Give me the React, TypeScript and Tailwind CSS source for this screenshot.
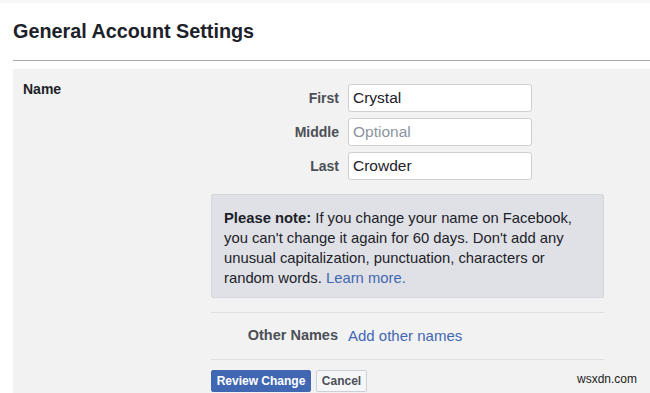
import React from "react";

const font = { fontFamily: '"Liberation Sans", Arial, sans-serif' };

function Field({ label, value, placeholder }: { label: string; value?: string; placeholder?: string }) {
  return (
    <div className="flex items-center">
      <div className="w-[128px] text-right text-[14px] font-bold text-[#4b4f56]">{label}</div>
      <div className="ml-[9px] w-[184px] h-[28px] bg-white border border-[#ccd0d5] rounded-[3px] flex items-center pl-[4px] text-[15.5px]">
        {value ? (
          <span className="text-[#1d2129]">{value}</span>
        ) : (
          <span className="text-[#8d949e]">{placeholder}</span>
        )}
      </div>
    </div>
  );
}

export default function App() {
  return (
    <div className="w-[650px] h-[393px] bg-white overflow-hidden relative" style={font}>
      <div className="h-[3px] bg-[#f7f7f7]" />
      <div className="pl-[13px] pt-[16px] h-[57px] text-[19.8px] font-bold text-[#1d2129] leading-[24px]">
        General Account Settings
      </div>
      <div className="ml-[13px] border-t border-[#a8a8a8]" />
      <div className="ml-[13px] mt-[8px] bg-[#f2f2f2] flex h-[400px]">
        <div className="w-[198px] pl-[10px] pt-[10px] text-[14px] font-bold text-[#1d2129]">Name</div>
        <div className="w-[393px] pt-[15px]">
          <div className="flex flex-col gap-[6px]">
            <Field label="First" value="Crystal" />
            <Field label="Middle" placeholder="Optional" />
            <Field label="Last" value="Crowder" />
          </div>
          <div className="mt-[14px] h-[104px] bg-[#dfe1e6] border border-[#d3d6db] rounded-[2px] pl-[12px] pr-[10px] pt-[13px] text-[14.8px] leading-[20px] text-[#1d2129]">
            <p>
              <b>Please note:</b> If you change your name on Facebook, you can't change it again for 60 days. Don't add any unusual capitalization, punctuation, characters or random words. <span className="text-[#4267b2]">Learn more.</span>
            </p>
          </div>
          <div className="mt-[14px] border-t border-[#dddfe2]" />
          <div className="flex items-center h-[46px]">
            <div className="w-[127px] text-right text-[14.5px] font-bold text-[#4b4f56]">Other Names</div>
            <div className="ml-[10px] text-[15px] text-[#4267b2]">Add other names</div>
          </div>
          <div className="border-t border-[#dddfe2]" />
          <div className="mt-[10px] flex gap-[5px]">
            <div className="h-[22px] w-[100px] bg-[#4267b2] border border-[#4267b2] rounded-[2px] text-white text-[12px] font-bold flex items-center justify-center">
              Review Change
            </div>
            <div className="h-[22px] w-[51px] bg-[#f5f6f7] border border-[#ccd0d5] rounded-[2px] text-[#4b4f56] text-[12px] font-bold flex items-center justify-center">
              Cancel
            </div>
          </div>
        </div>
      </div>
      <div className="absolute left-[577px] top-[370px] text-[12px] text-[#222]">wsxdn.com</div>
    </div>
  );
}
